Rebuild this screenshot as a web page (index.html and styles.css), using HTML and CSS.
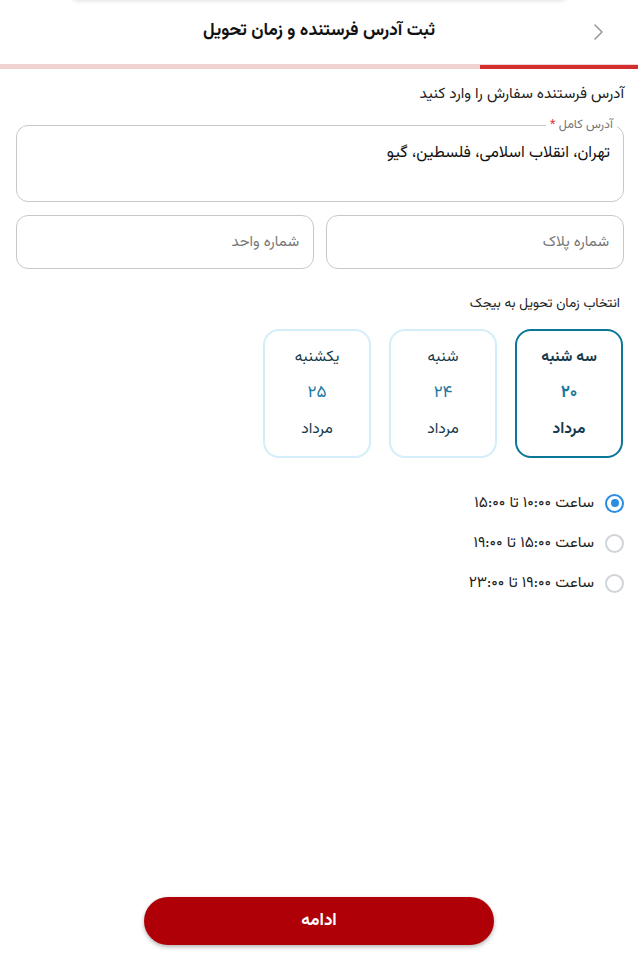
FILE: index.html
```html
<!DOCTYPE html>
<html lang="fa" dir="rtl">
<head>
<meta charset="utf-8">
<link rel="stylesheet" href="styles.css">
</head>
<body>
<div class="top-shadow"></div>
<header class="header">
  <span class="back">
    <svg width="12" height="18" viewBox="0 0 12 18"><path d="M3 2 L10 9 L3 16" fill="none" stroke="#9a9a9a" stroke-width="1.6" stroke-linecap="round" stroke-linejoin="round"/></svg>
  </span>
  <h1 class="title">ثبت آدرس فرستنده و زمان تحویل</h1>
</header>
<div class="progress"><div class="progress-fill"></div></div>
<main class="content">
  <p class="intro">آدرس فرستنده سفارش را وارد کنید</p>
  <fieldset class="field field-area">
    <legend class="legend">آدرس کامل <span class="req">*</span></legend>
    <div class="value">تهران، انقلاب اسلامی، فلسطین، گیو</div>
  </fieldset>
  <div class="row">
    <div class="field field-input"><span class="placeholder">شماره پلاک</span></div>
    <div class="field field-input"><span class="placeholder">شماره واحد</span></div>
  </div>
  <p class="section">انتخاب زمان تحویل به بیجک</p>
  <div class="days">
    <div class="day selected">
      <span class="day-name">سه شنبه</span>
      <span class="day-num">۲۰</span>
      <span class="day-month">مرداد</span>
    </div>
    <div class="day">
      <span class="day-name">شنبه</span>
      <span class="day-num">۲۴</span>
      <span class="day-month">مرداد</span>
    </div>
    <div class="day">
      <span class="day-name">یکشنبه</span>
      <span class="day-num">۲۵</span>
      <span class="day-month">مرداد</span>
    </div>
  </div>
  <div class="slots">
    <label class="slot"><span class="radio checked"></span><span class="slot-text">ساعت ۱۰:۰۰ تا ۱۵:۰۰</span></label>
    <label class="slot"><span class="radio"></span><span class="slot-text">ساعت ۱۵:۰۰ تا ۱۹:۰۰</span></label>
    <label class="slot"><span class="radio"></span><span class="slot-text">ساعت ۱۹:۰۰ تا ۲۳:۰۰</span></label>
  </div>
</main>
<footer class="footer">
  <button class="btn">ادامه</button>
</footer>
</body>
</html>
```
FILE: styles.css
```css
* { box-sizing: border-box; }
html, body { margin: 0; padding: 0; }
body {
  width: 638px;
  height: 960px;
  background: #fff;
  font-family: "Vazirmatn", "DejaVu Sans", sans-serif;
  color: #222;
  position: relative;
  overflow: hidden;
}
.top-shadow {
  position: absolute;
  top: -20px;
  left: 70px;
  width: 498px;
  height: 20px;
  background: #fff;
  box-shadow: 0 1px 4px rgba(0,0,0,0.12);
  border-radius: 8px;
}
.header {
  height: 64px;
  display: flex;
  align-items: center;
  justify-content: center;
  position: relative;
}
.back {
  position: absolute;
  right: 34px;
  top: 23px;
  display: flex;
}
.title {
  margin: 0;
  font-size: 17.6px;
  font-weight: bold;
  color: #111;
  margin-top: -3px;
}
.progress {
  height: 5px;
  background: #f2d3d3;
  position: relative;
}
.progress-fill {
  position: absolute;
  right: 0;
  top: 1px;
  width: 158px;
  height: 4px;
  background: #d32f2f;
}
.content {
  padding: 0 14px 0 16px;
}
.intro {
  margin: 14px 0 0;
  font-size: 15.3px;
  color: #222;
  line-height: 22px;
}
.field {
  border: 1px solid #c8c8c8;
  border-radius: 12px;
}
.field-area {
  margin: 13px 0 0;
  padding: 0 6px 0 12px;
  height: 84px;
  position: relative;
}
.legend {
  font-size: 12.5px;
  color: #777;
  padding: 0 4px;
  margin-right: 0;
  line-height: 14px;
}
.req { color: #e53935; }
.value {
  font-size: 16px;
  color: #111;
  margin-top: 10px;
  margin-right: 7px;
  line-height: 24px;
}
.row {
  display: flex;
  gap: 12px;
  margin-top: 13px;
}
.field-input {
  flex: 1;
  height: 54px;
  display: flex;
  align-items: center;
  padding: 0 14px;
}
.placeholder {
  font-size: 15px;
  color: #777;
}
.section {
  margin: 25px 4px 0 0;
  font-size: 13.6px;
  color: #222;
  line-height: 20px;
}
.days {
  display: flex;
  gap: 18px;
  margin-top: 15px;
  padding-right: 1px;
}
.day {
  width: 108px;
  height: 129px;
  border: 2px solid #d3eefa;
  border-radius: 16px;
  display: flex;
  flex-direction: column;
  align-items: center;
  justify-content: center;
  gap: 13px;
}
.day.selected {
  border-color: #0b7796;
}
.day-name, .day-month {
  font-size: 15.5px;
  color: #163a4c;
  line-height: 23px;
}
.day-num {
  font-size: 17px;
  color: #1a78a0;
  line-height: 23px;
}
.day.selected span { font-weight: bold; }
.slots {
  margin-top: 35px;
  display: flex;
  flex-direction: column;
  gap: 20px;
}
.slot {
  display: flex;
  align-items: center;
  gap: 11px;
  height: 20px;
}
.radio {
  width: 19px;
  height: 19px;
  border-radius: 50%;
  border: 2px solid #d0d4d9;
  position: relative;
}
.radio.checked {
  border-color: #2b8de0;
}
.radio.checked::after {
  content: "";
  position: absolute;
  top: 3.5px;
  left: 3.5px;
  width: 8px;
  height: 8px;
  border-radius: 50%;
  background: #2b8de0;
}
.slot-text {
  font-size: 15.5px;
  color: #222;
}
.footer {
  position: absolute;
  bottom: 15px;
  left: 0;
  right: 0;
  display: flex;
  justify-content: center;
}
.btn {
  width: 350px;
  height: 48px;
  border: none;
  border-radius: 24px;
  background: #b00007;
  color: #fff;
  font-family: inherit;
  font-size: 17px;
  font-weight: bold;
  box-shadow: 0 2px 4px rgba(0,0,0,0.3);
}
```
